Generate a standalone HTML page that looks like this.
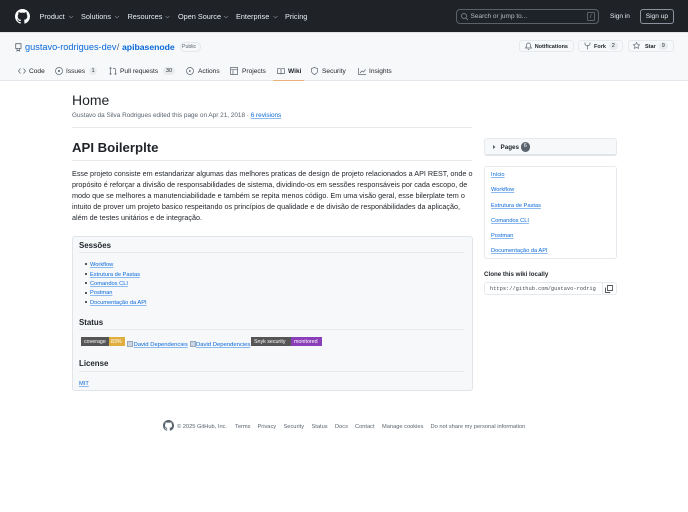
<!DOCTYPE html>
<html><head><meta charset="utf-8"><style>
html,body{margin:0;padding:0;width:688px;height:512px;overflow:hidden;background:#fff;font-family:"Liberation Sans",sans-serif;color:#1f2328}
#w{position:absolute;left:0;top:0;width:688px;height:512px;overflow:hidden;filter:blur(.3px)}
.t{position:absolute;white-space:nowrap;line-height:12px;height:12px}
.b{position:absolute;box-sizing:border-box}
a{color:#0969da;text-decoration:none}
.u{text-decoration:underline;text-decoration-thickness:.5px;text-underline-offset:1px;text-decoration-color:#8dbbf0}
.n{color:#e6edf3;font-size:7.3px;top:10.7px;font-weight:400}
.tab{font-size:6.6px;top:65.5px;color:#1f2328}
.bt{font-size:5.5px;top:40.5px;color:#1f2328;font-weight:700;line-height:12px}
svg{position:absolute;overflow:visible}
.ic{fill:none;stroke:#59636e}
.cnt{position:absolute;background:#e9ecef;border-radius:4px;font-size:5.6px;text-align:center;height:8px;line-height:8px;color:#1f2328}
.p{font-size:7.22px;color:#1f2328;left:72px}
.h3{font-size:7.9px;font-weight:700;left:79px}
.ln{position:absolute;height:1px;background:#e8ebee}
.li{font-size:5.7px;left:90px}
.sb{font-size:5.7px;left:491px}
.f{font-size:5.7px;top:420.7px;color:#59636e}
.bul{position:absolute;left:85px;width:2px;height:2px;border-radius:50%;background:#1f2328}
.brk{position:absolute;width:6px;height:6px;background:#c9d6e6;border:.5px solid #9aa7b5;box-sizing:border-box}
</style></head><body><div id="w">
<div class="b" style="left:0;top:0;width:688px;height:32px;background:#1f2328"></div>
<svg style="left:15px;top:9px" width="15" height="15" viewBox="0 0 16 16"><path fill="#fff" d="M8 0c4.42 0 8 3.58 8 8a8.013 8.013 0 0 1-5.45 7.59c-.4.08-.55-.17-.55-.38 0-.27.01-1.13.01-2.2 0-.75-.25-1.23-.54-1.48 1.78-.2 3.65-.88 3.65-3.95 0-.88-.31-1.59-.82-2.15.08-.2.36-1.02-.08-2.12 0 0-.67-.22-2.2.82-.64-.18-1.32-.27-2-.27-.68 0-1.36.09-2 .27-1.53-1.03-2.2-.82-2.2-.82-.44 1.1-.16 1.92-.08 2.12-.51.56-.82 1.28-.82 2.15 0 3.06 1.86 3.75 3.64 3.95-.23.2-.44.55-.51 1.07-.46.21-1.61.55-2.33-.66-.15-.24-.6-.83-1.23-.82-.67.01-.27.38.01.53.34.19.73.9.82 1.13.16.45.68 1.31 2.69.94 0 .67.01 1.3.01 1.49 0 .21-.15.45-.55.38A7.995 7.995 0 0 1 0 8c0-4.42 3.58-8 8-8Z"/></svg>
<div class="t n" style="left:39.5px">Product</div>
<div class="t n" style="left:81px">Solutions</div>
<div class="t n" style="left:127.5px">Resources</div>
<div class="t n" style="left:178px">Open Source</div>
<div class="t n" style="left:236px">Enterprise</div>
<div class="t n" style="left:285px">Pricing</div>
<svg style="left:68.5px;top:15.5px" width="210" height="3" fill="none" stroke="#7d848b" stroke-width=".6"><path d="M0 0l2 2 2-2M46 0l2 2 2-2M96.500 0l2 2 2-2M155 0l2 2 2-2M204.500 0l2 2 2-2"/></svg>
<div class="b" style="left:455.5px;top:9px;width:143.5px;height:14.5px;border:1px solid #5b6168;border-radius:4px;background:#1f2328"></div>
<svg style="left:461px;top:13px" width="7" height="7" fill="none" stroke="#8b949e" stroke-width=".7"><circle cx="3" cy="3" r="2.500"/><path d="M5 5l2 2"/></svg>
<div class="t" style="left:470.5px;top:11px;font-size:6.5px;color:#b6bcc3">Search or jump to...</div>
<div class="b" style="left:587px;top:11.5px;width:8px;height:9.5px;border:.7px solid #5b6168;border-radius:1.500px"></div>
<div class="t" style="left:590px;top:10.5px;font-size:5.500px;color:#8b949e">/</div>
<div class="t" style="left:610px;top:10.7px;font-size:6.500px;color:#e6edf3;font-weight:400">Sign in</div>
<div class="b" style="left:640px;top:9px;width:34px;height:14.5px;border:1px solid #8b949e;border-radius:3px"></div>
<div class="t" style="left:645.7px;top:10.7px;font-size:6.600px;color:#e6edf3">Sign up</div>

<div class="b" style="left:0;top:32px;width:688px;height:49px;background:#f6f8fa;border-top:1px solid #e1e5e9;border-bottom:1px solid #e4e8ec"></div>
<svg class="ic" style="left:15px;top:42.500px" width="7" height="9" viewBox="0 0 7 9" stroke-width=".8"><path d="M.7.700h5.300v4.800H.7zM2 5.500v2.500l1.200-.8 1.200.8V5.500"/></svg>
<div class="t" style="left:25px;top:41px;font-size:9.200px;color:#0969da">gustavo-rodrigues-dev</div>
<div class="t" style="left:116.800px;top:41px;font-size:9.200px;color:#59636e">/</div>
<div class="t" style="left:122px;top:41px;font-size:8.650px;color:#0969da;font-weight:700">apibasenode</div>
<div class="b" style="left:179.500px;top:42px;width:21px;height:9.500px;border:.7px solid #e3e6ea;border-radius:5px"></div>
<div class="t" style="left:182px;top:41px;font-size:5.200px;color:#59636e">Public</div>

<div class="b" style="left:519px;top:40px;width:55px;height:12px;border:.7px solid #e6e9ed;border-radius:3px;background:#f6f8fa"></div>
<svg class="ic" style="left:524.500px;top:42px" width="7" height="8" viewBox="0 0 7 8" stroke-width=".7"><path d="M.5 6h6L5.500 4.500V3a2 2 0 0 0-4 0v1.500zM2.800 7.500h1.400"/></svg>
<div class="t bt" style="left:534.700px">Notifications</div>
<div class="b" style="left:578px;top:40px;width:45px;height:12px;border:.7px solid #e6e9ed;border-radius:3px;background:#f6f8fa"></div>
<svg class="ic" style="left:583.500px;top:42px" width="7" height="8" viewBox="0 0 7 8" stroke-width=".7"><path d="M1 .5v1.500q0 1.500 2.500 1.500T6 2V.5M3.500 3.500V7.500"/></svg>
<div class="t bt" style="left:594px">Fork</div>
<div class="cnt" style="left:609px;top:42px;width:8.500px;font-size:5.500px">2</div>
<div class="b" style="left:627.500px;top:40px;width:46px;height:12px;border:.7px solid #e6e9ed;border-radius:3px;background:#f6f8fa"></div>
<svg class="ic" style="left:633px;top:42px" width="7" height="7" viewBox="0 0 16 16" stroke-width="1.400"><path d="M8 1l2.200 4.500 5 .7-3.600 3.500.9 5L8 12.300 3.500 14.700l.9-5L.8 6.200l5-.7z"/></svg>
<div class="t bt" style="left:645px">Star</div>
<div class="cnt" style="left:659px;top:42px;width:8.500px;font-size:5.500px">9</div>

<svg class="ic" style="left:18px;top:68px" width="8" height="6" viewBox="0 0 8 6" stroke-width=".7"><path d="M2.500.5L.5 3l2 2.500M5.500.5l2 2.500-2 2.500"/></svg>
<div class="t tab" style="left:29px">Code</div>
<svg class="ic" style="left:55px;top:67px" width="8" height="8" viewBox="0 0 8 8" stroke-width=".7"><circle cx="4" cy="4" r="3.500"/><circle cx="4" cy="4" r=".7" fill="#59636e"/></svg>
<div class="t tab" style="left:66px">Issues</div>
<div class="cnt" style="left:89px;top:67px;width:8px">1</div>
<svg class="ic" style="left:109px;top:67px" width="8" height="8" viewBox="0 0 8 8" stroke-width=".7"><path d="M1.500 1.800v4.400M6.500 6V2.500Q6.500 1.500 5 1.500H4"/><circle cx="1.500" cy="1.200" r=".6"/><circle cx="1.500" cy="6.800" r=".6"/><circle cx="6.500" cy="6.800" r=".6"/></svg>
<div class="t tab" style="left:120px">Pull requests</div>
<div class="cnt" style="left:163px;top:67px;width:12px">30</div>
<svg class="ic" style="left:186px;top:67px" width="8" height="8" viewBox="0 0 8 8" stroke-width=".7"><circle cx="4" cy="4" r="3.500"/><path d="M3.200 2.700v2.600L5.200 4z" fill="#59636e" stroke="none"/></svg>
<div class="t tab" style="left:198px">Actions</div>
<svg class="ic" style="left:230px;top:67px" width="8" height="8" viewBox="0 0 8 8" stroke-width=".7"><path d="M.5.500h7v7h-7zM.5 2.700h7M3 2.700v4.800"/></svg>
<div class="t tab" style="left:242px">Projects</div>
<svg class="ic" style="left:277px;top:67.500px" width="8" height="7" viewBox="0 0 8 7" stroke-width=".7"><path d="M.5.700H3Q4 .7 4 1.700 4 .7 5 .7H7.500V5.500H5Q4 5.500 4 6.300 4 5.500 3 5.500H.5zM4 1.700v4.600"/></svg>
<div class="t tab" style="left:288px;font-weight:700">Wiki</div>
<div class="b" style="left:273px;top:79.500px;width:31px;height:1.500px;background:#e8b27a"></div>
<svg class="ic" style="left:311px;top:67px" width="7" height="8" viewBox="0 0 7 8" stroke-width=".7"><path d="M3.500.5l3 1v2.500Q6.500 6.300 3.500 7.500.5 6.300.5 4V1.500z"/></svg>
<div class="t tab" style="left:322px">Security</div>
<svg class="ic" style="left:358px;top:67.500px" width="8" height="7" viewBox="0 0 8 7" stroke-width=".7"><path d="M.5 0v6.500H8M2 5l2-2 1.500 1L7.500 1.500"/></svg>
<div class="t tab" style="left:369px">Insights</div>

<div class="t" style="left:72px;top:94px;font-size:14px;font-weight:400">Home</div>
<div class="t" style="left:72px;top:110.400px;font-size:6.400px;color:#59636e">Gustavo da Silva Rodrigues edited this page on Apr 21, 2018 · <a class="u">6 revisions</a></div>
<div class="ln" style="left:72px;top:127px;width:400px"></div>
<div class="t" style="left:72px;top:141.500px;font-size:13.200px;font-weight:700">API Boilerplte</div>
<div class="ln" style="left:72px;top:160px;width:400px"></div>
<div class="t p" style="top:168px">Esse projeto consiste em estandarizar algumas das melhores praticas de design de projeto relacionados a API REST, onde o</div>
<div class="t p" style="top:179px">propósito é reforçar a divisão de responsabilidades de sistema, dividindo-os em sessões responsáveis por cada escopo, de</div>
<div class="t p" style="top:190px">modo que se melhores a manutenciabilidade e também se repita menos código. Em uma visão geral, esse bilerplate tem o</div>
<div class="t p" style="top:201px">intuito de prover um projeto basico respeitando os princípios de qualidade e de divisão de responábilidades da aplicação,</div>
<div class="t p" style="top:212px">além de testes unitários e de integração.</div>

<div class="b" style="left:72px;top:236px;width:401px;height:155px;background:#f6f8fa;border:1px solid #e1e5e9;border-radius:3px"></div>
<div class="t h3" style="top:240px">Sessões</div>
<div class="ln" style="left:79px;top:252px;width:385px"></div>
<div class="bul" style="top:263px"></div><div class="bul" style="top:272.500px"></div><div class="bul" style="top:282px"></div><div class="bul" style="top:291.500px"></div><div class="bul" style="top:301px"></div>
<div class="t li" style="top:259px"><a class="u">Workflow</a></div>
<div class="t li" style="top:268.500px"><a class="u">Estrutura de Pastas</a></div>
<div class="t li" style="top:278px"><a class="u">Comandos CLI</a></div>
<div class="t li" style="top:287px"><a class="u">Postman</a></div>
<div class="t li" style="top:297px"><a class="u">Documentação da API</a></div>
<div class="t h3" style="top:317px">Status</div>
<div class="ln" style="left:79px;top:329px;width:385px"></div>
<div class="b" style="left:81px;top:337px;width:28px;height:9px;background:#555"></div>
<div class="b" style="left:109px;top:337px;width:16px;height:9px;background:#dfae3f"></div>
<div class="t" style="left:84px;top:338px;font-size:5.300px;color:#fff;line-height:9px">coverage</div>
<div class="t" style="left:111px;top:338px;font-size:5.300px;color:#fff;line-height:9px">83%</div>
<div class="brk" style="left:127px;top:340.500px"></div>
<div class="t" style="left:133.500px;top:339px;font-size:5.900px"><a class="u">David Dependencies</a></div>
<div class="brk" style="left:189.500px;top:340.500px"></div>
<div class="t" style="left:196px;top:339px;font-size:5.900px"><a class="u">David Dependencies</a></div>
<div class="b" style="left:251px;top:337px;width:40px;height:9px;background:#555"></div>
<div class="b" style="left:291px;top:337px;width:31px;height:9px;background:#8a3fb8"></div>
<div class="t" style="left:254px;top:338px;font-size:5.300px;color:#fff;line-height:9px">Snyk security</div>
<div class="t" style="left:294px;top:338px;font-size:5.300px;color:#fff;line-height:9px">monitored</div>
<div class="t h3" style="top:358.300px">License</div>
<div class="ln" style="left:79px;top:371px;width:385px"></div>
<div class="t li" style="left:79px;top:378px"><a class="u">MIT</a></div>

<div class="b" style="left:484px;top:138px;width:133px;height:18px;background:#f6f8fa;border:1px solid #e6e9ed;border-bottom:2px solid #e1e5e9;border-radius:3px"></div>
<svg style="left:493px;top:145px" width="3" height="4"><path d="M0 0l2.500 2L0 4z" fill="#59636e"/></svg>
<div class="t" style="left:500.500px;top:141.800px;font-size:6.300px;font-weight:700">Pages</div>
<div class="b" style="left:520.500px;top:142px;width:9.500px;height:9.500px;background:#59636e;border-radius:5px;color:#fff;font-size:5.500px;line-height:9.500px;text-align:center">6</div>
<div class="b" style="left:484px;top:166px;width:133px;height:93px;border:1px solid #e6e9ed;border-radius:3px"></div>
<div class="t sb" style="top:169px"><a class="u">Início</a></div>
<div class="t sb" style="top:184px"><a class="u">Workflow</a></div>
<div class="t sb" style="top:199.500px"><a class="u">Estrutura de Pastas</a></div>
<div class="t sb" style="top:214.500px"><a class="u">Comandos CLI</a></div>
<div class="t sb" style="top:229.700px"><a class="u">Postman</a></div>
<div class="t sb" style="top:245px"><a class="u">Documentação da API</a></div>
<div class="t" style="left:484px;top:269px;font-size:6.200px;font-weight:700">Clone this wiki locally</div>
<div class="b" style="left:484px;top:282px;width:133px;height:13px;border:1px solid #e6e9ed;border-radius:3px"></div>
<div class="b" style="left:601.500px;top:282px;width:1px;height:13px;background:#e6e9ed"></div>
<div class="t" style="left:490px;top:282.500px;font-family:'Liberation Mono',monospace;font-size:5.350px;color:#444c56">https://github.com/gustavo-rodrig</div>
<svg style="left:605px;top:284.500px" width="8" height="8" fill="none" stroke="#1f2328" stroke-width=".7"><path d="M1 3H.5v4.500H5V7M2.500.5H7.500V5.500H2.500z"/></svg>

<svg style="left:162.700px;top:419.500px" width="11" height="11" viewBox="0 0 16 16"><path fill="#59636e" d="M8 0c4.42 0 8 3.58 8 8a8.013 8.013 0 0 1-5.45 7.59c-.4.08-.55-.17-.55-.38 0-.27.01-1.13.01-2.2 0-.75-.25-1.23-.54-1.48 1.78-.2 3.65-.88 3.65-3.95 0-.88-.31-1.59-.82-2.15.08-.2.36-1.02-.08-2.12 0 0-.67-.22-2.2.82-.64-.18-1.32-.27-2-.27-.68 0-1.36.09-2 .27-1.53-1.03-2.2-.82-2.2-.82-.44 1.1-.16 1.92-.08 2.12-.51.56-.82 1.28-.82 2.15 0 3.06 1.86 3.75 3.64 3.95-.23.2-.44.55-.51 1.07-.46.21-1.61.55-2.33-.66-.15-.24-.6-.83-1.23-.82-.67.01-.27.38.01.53.34.19.73.9.82 1.13.16.45.68 1.31 2.69.94 0 .67.01 1.3.01 1.49 0 .21-.15.45-.55.38A7.995 7.995 0 0 1 0 8c0-4.42 3.58-8 8-8Z"/></svg>
<div class="t f" style="left:177px">© 2025 GitHub, Inc.</div>
<div class="t f" style="left:235px">Terms</div>
<div class="t f" style="left:257.500px">Privacy</div>
<div class="t f" style="left:283.500px">Security</div>
<div class="t f" style="left:311.500px">Status</div>
<div class="t f" style="left:335px">Docs</div>
<div class="t f" style="left:355px">Contact</div>
<div class="t f" style="left:382px">Manage cookies</div>
<div class="t f" style="left:430.500px">Do not share my personal information</div>
</div></body></html>
